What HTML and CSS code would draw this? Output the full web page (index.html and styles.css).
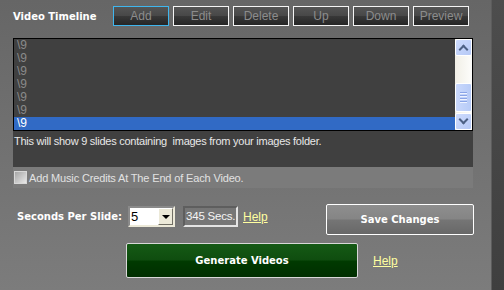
FILE: index.html
```html
<!DOCTYPE html>
<html lang="en">

<head>
    <meta charset="UTF-8">
    <title>Video Timeline</title>
    <link rel="stylesheet" href="styles.css">
</head>

<body>
    <div class="panel">
        <div class="toolbar">
            <span class="title">Video Timeline</span>
            <div class="tool-buttons">
                <button class="tool-btn focused">Add</button>
                <button class="tool-btn">Edit</button>
                <button class="tool-btn">Delete</button>
                <button class="tool-btn">Up</button>
                <button class="tool-btn">Down</button>
                <button class="tool-btn">Preview</button>
            </div>
        </div>

        <div class="listbox">
            <div class="list-rows">
                <div class="list-row">\9</div>
                <div class="list-row">\9</div>
                <div class="list-row">\9</div>
                <div class="list-row">\9</div>
                <div class="list-row">\9</div>
                <div class="list-row">\9</div>
                <div class="list-row selected">\9</div>
            </div>
            <div class="scrollbar">
                <div class="sb-btn"><span class="sb-arrow up"></span></div>
                <div class="sb-track">
                    <div class="sb-thumb">
                        <span></span><span></span><span></span><span></span>
                    </div>
                </div>
                <div class="sb-btn"><span class="sb-arrow down"></span></div>
            </div>
        </div>

        <div class="description">This will show 9 slides containing&nbsp; images from your images folder.</div>

        <label class="credits">
            <span class="checkbox"></span>
            Add Music Credits At The End of Each Video.
        </label>

        <div class="settings">
            <div class="seconds">
                <span class="label">Seconds Per Slide:</span>
                <div class="select">
                    <span class="select-value">5</span>
                    <span class="select-btn"><span class="tri"></span></span>
                </div>
                <div class="total">345 Secs.</div>
                <a class="help" href="#">Help</a>
            </div>
            <button class="save-btn">Save Changes</button>
        </div>

        <div class="generate-row">
            <button class="generate-btn">Generate Videos</button>
            <a class="help" href="#">Help</a>
        </div>
    </div>
    <div class="side"></div>
</body>

</html>
```

FILE: styles.css
```css
body {
    margin: 0;
    padding: 0;
    display: flex;
    width: 504px;
    height: 290px;
    overflow: hidden;
    font-family: "Liberation Sans", Arial, sans-serif;
    font-size: 11px;
}

.panel {
    width: 491px;
    height: 290px;
    box-sizing: border-box;
    padding-left: 13px;
    background: linear-gradient(#666666, #7c7c7c);
    display: flex;
    flex-direction: column;
}

.side {
    flex: 1;
    background: linear-gradient(#4d4d4d, #3f3f3f);
    border-left: 1px solid #5c5c5c;
}

/* toolbar */
.toolbar {
    display: flex;
    align-items: center;
    margin-top: 6px;
    height: 20px;
}

.title {
    width: 100px;
    color: #fff;
    font-family: "DejaVu Sans", Verdana, sans-serif;
    font-weight: bold;
    font-size: 10px;
}

.tool-buttons {
    display: flex;
    gap: 4px;
}

.tool-btn {
    width: 56px;
    height: 20px;
    margin: 0;
    padding: 0;
    border: 1px solid #f4f4f4;
    background: linear-gradient(#555555 0%, #474747 50%, #383838 51%, #262626 100%);
    color: #8c8c8c;
    font-family: "Liberation Sans", Arial, sans-serif;
    font-size: 12px;
}

.tool-btn.focused {
    border-color: #3fb6ee;
}

/* list */
.listbox {
    margin-top: 12px;
    width: 460px;
    height: 93px;
    box-sizing: border-box;
    border: 1px solid #000;
    background: #404040;
    display: flex;
}

.list-rows {
    flex: 1;
    display: flex;
    flex-direction: column;
}

.list-row {
    height: 13px;
    line-height: 13px;
    padding-left: 3px;
    color: #8a8a8a;
    font-size: 12px;
}

.list-row.selected {
    background: #316ac5;
    color: #fff;
}

.scrollbar {
    width: 17px;
    display: flex;
    flex-direction: column;
    background: linear-gradient(90deg, #f1efe6, #fdfdfb);
}

.sb-btn {
    height: 17px;
    box-sizing: border-box;
    border: 1px solid #fff;
    border-radius: 2px;
    background: linear-gradient(135deg, #cddbfd, #b6c9f6);
    display: flex;
    align-items: center;
    justify-content: center;
}

.sb-arrow {
    width: 5px;
    height: 5px;
    border-left: 2px solid #4d6185;
    border-top: 2px solid #4d6185;
}

.sb-arrow.up {
    transform: translateY(2px) rotate(45deg);
}

.sb-arrow.down {
    transform: translateY(-2px) rotate(225deg);
}

.sb-track {
    flex: 1;
    display: flex;
    flex-direction: column;
    justify-content: flex-end;
    padding-bottom: 1px;
}

.sb-thumb {
    height: 29px;
    box-sizing: border-box;
    border: 1px solid #fff;
    border-radius: 2px;
    background: linear-gradient(90deg, #c9d8fc, #b7cbf7);
    display: flex;
    flex-direction: column;
    align-items: center;
    justify-content: center;
    gap: 1px;
}

.sb-thumb span {
    width: 7px;
    height: 1px;
    background: #8aa4e6;
    border-bottom: 1px solid #eef3ff;
}

/* description + credits */
.description {
    width: 460px;
    height: 36px;
    box-sizing: border-box;
    padding: 4px 1px;
    background: #404040;
    color: #e8e8e8;
    letter-spacing: -0.25px;
}

.credits {
    width: 460px;
    height: 21px;
    box-sizing: border-box;
    padding-left: 1px;
    background: #7b7b7b;
    color: #e2e2e2;
    display: flex;
    align-items: center;
    gap: 2px;
    letter-spacing: -0.15px;
}

.checkbox {
    width: 11px;
    height: 11px;
    border: 1px solid #d8d8d8;
    background: linear-gradient(135deg, #a6a6a6, #e8e8e8);
}

/* settings row */
.settings {
    display: flex;
    align-items: flex-start;
    margin-top: 16px;
    width: 461px;
}

.seconds {
    display: flex;
    align-items: center;
    margin-top: 2px;
    padding-left: 4px;
}

.label {
    color: #fff;
    font-family: "DejaVu Sans", Verdana, sans-serif;
    font-weight: bold;
    font-size: 10px;
    margin-right: 6px;
}

.select {
    width: 47px;
    height: 21px;
    box-sizing: border-box;
    border: 2px solid;
    border-color: #8a8a8a #ece9d8 #ece9d8 #8a8a8a;
    background: #fff;
    display: flex;
}

.select-value {
    flex: 1;
    color: #000;
    font-size: 13px;
    line-height: 17px;
    padding-left: 1px;
}

.select-btn {
    width: 15px;
    box-sizing: border-box;
    border: 1px solid;
    border-color: #fff #716f64 #716f64 #fff;
    background: #ece9d8;
    display: flex;
    align-items: center;
    justify-content: center;
}

.tri {
    border-left: 4px solid transparent;
    border-right: 4px solid transparent;
    border-top: 4px solid #000;
}

.total {
    margin-left: 8px;
    width: 55px;
    height: 21px;
    box-sizing: border-box;
    border: 2px solid;
    border-color: #5e5e5e #e4e4e4 #e4e4e4 #5e5e5e;
    color: #f4f4f4;
    font-size: 11.5px;
    line-height: 16px;
    padding-left: 1px;
    white-space: nowrap;
    overflow: hidden;
    letter-spacing: -0.2px;
}

.help {
    color: #ffffa0;
    font-size: 12px;
    margin-left: 5px;
}

.save-btn {
    margin-left: auto;
    width: 148px;
    height: 31px;
    padding: 0;
    border: 1px solid #fff;
    border-radius: 2px;
    background: linear-gradient(#8e8e8e 0%, #858585 48%, #757575 52%, #686868 100%);
    color: #fff;
    font-family: "DejaVu Sans", Verdana, sans-serif;
    font-weight: bold;
    font-size: 10px;
}

.generate-row {
    display: flex;
    align-items: center;
    margin-top: 8px;
    padding-left: 113px;
}

.generate-btn {
    width: 232px;
    height: 35px;
    padding: 0;
    border: 1px solid #d8d8d8;
    border-radius: 2px;
    background: linear-gradient(#155a15 0%, #0f4d0f 48%, #003a00 52%, #002e00 100%);
    color: #fff;
    font-family: "DejaVu Sans", Verdana, sans-serif;
    font-weight: bold;
    font-size: 10px;
}

.generate-row .help {
    margin-left: 15px;
}
```
